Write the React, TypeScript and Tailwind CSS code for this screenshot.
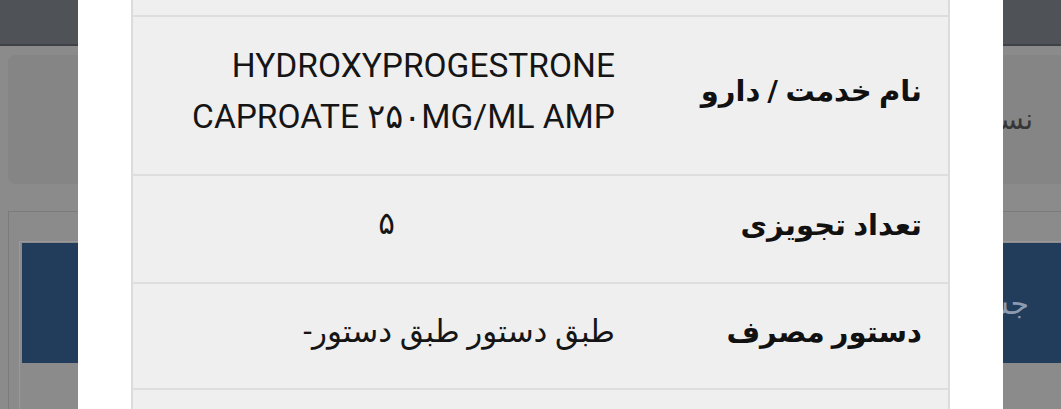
import React from 'react';

type RowProps = {
  label: string;
  value: React.ReactNode;
  height: string;
  valueClass: string;
};

function Row({ label, value, height, valueClass }: RowProps) {
  return (
    <div className={`grid grid-cols-[308px_1fr] items-center border-t-2 border-[#dedede] ${height}`}>
      <div className="pb-[8px] pr-[26px] text-right text-[29px] font-bold leading-[51px] text-[#111111]">{label}</div>
      <div className={`px-[25px] leading-[51px] text-[#151515] ${valueClass}`}>{value}</div>
    </div>
  );
}

export default function App() {
  return (
    <div dir="rtl" className="relative h-[409px] w-full overflow-hidden bg-[#8b8b8b] font-[Roboto,'DejaVu_Sans',sans-serif]">
      {/* page behind the dialog (already dimmed) */}
      <div className="h-[46px] border-b-2 border-[#3e4145] bg-[#4f5257]" />
      <div className="ml-2 mr-[-16px] pt-[9px]">
        <div className="flex h-[129px] items-center rounded-l-lg bg-[#858585] pr-[44px] text-[28px] text-[#363636]">
          نسخه‌های ثبت شده
        </div>
        <div className="mt-[27px] border-l border-t border-[#7b7b7b] pl-[10px] pt-[29px]">
          <div className="border-l border-t border-[#9a9a9a] pl-[2px] pt-[1px]">
            <div className="flex h-[120px] items-center bg-[#223c5b] pr-[48px] text-[30px] text-[#8d9bb0]">
              جستجوی نسخه
            </div>
            <div className="h-[60px]" />
          </div>
        </div>
      </div>

      {/* dialog */}
      <div className="absolute left-[78px] top-0 h-full w-[925px] bg-white px-[53px]">
        <div className="border-x-2 border-[#dcdcdc] bg-[#efefef]">
          <div className="h-[15px]" />
          <Row
            height="h-[159px]"
            label="نام خدمت / دارو"
            value="HYDROXYPROGESTRONE CAPROATE ۲۵۰MG/ML AMP"
            valueClass="pb-[10px] text-right text-[33.5px]"
          />
          <Row
            height="h-[108px]"
            label="تعداد تجویزی"
            value="۵"
            valueClass="pb-[12px] text-center text-[31px]"
          />
          <Row
            height="h-[106px]"
            label="دستور مصرف"
            value="طبق دستور طبق دستور-"
            valueClass="pb-[10px] text-right text-[31px]"
          />
          <div className="h-[40px] border-t-2 border-[#dedede]" />
        </div>
      </div>
    </div>
  );
}
